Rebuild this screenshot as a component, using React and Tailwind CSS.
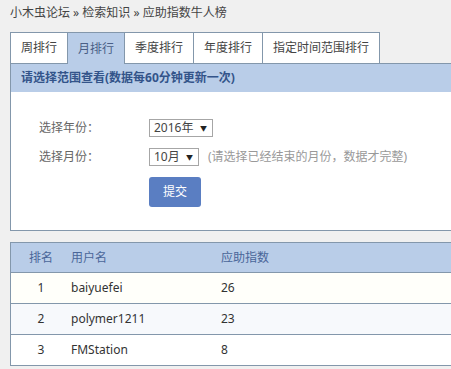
import React from "react";

const tabs = ["周排行", "月排行", "季度排行", "年度排行", "指定时间范围排行"];
const rows = [
  { r: "1", n: "baiyuefei", v: "26", bg: "bg-[#fffffa]" },
  { r: "2", n: "polymer1211", v: "23", bg: "bg-[#f7f9fc]" },
  { r: "3", n: "FMStation", v: "8", bg: "bg-white" },
];

function Select({ label, w }) {
  return (
    <div className={`h-[18px] ${w} border border-[#a6a6a6] bg-white flex items-center justify-between pl-[4px] pr-[5px] text-[12px] text-[#444] leading-none`}>
      <span>{label}</span>
      <span className="text-[7px] text-[#222]">▼</span>
    </div>
  );
}

export default function App() {
  return (
    <div
      className="w-[451px] h-[369px] overflow-hidden bg-[#f0f0f0] text-[12px] text-[#333]"
      style={{ fontFamily: '"Noto Sans", "Noto Sans CJK SC", sans-serif' }}
    >
      <div className="h-[32px] pl-[10px] pt-[4px] leading-[18px] text-[#444]">
        小木虫论坛 » 检索知识 » 应助指数牛人榜
      </div>
      <div className="pl-[10px] w-[520px]">
        <div className="flex">
          {tabs.map((t, i) => (
            <div
              key={t}
              className={`h-[31px] flex items-center px-[10px] border-t border-l border-[#8397ab] ${
                i === tabs.length - 1 ? "border-r" : ""
              } ${i === 1 ? "bg-[#b9cde8] text-[#4a5f86] relative z-10 h-[32px] -mb-px" : "bg-white text-[#444]"}`}
            >
              {t}
            </div>
          ))}
        </div>
        <div className="border border-[#8397ab] bg-white">
          <div className="h-[28px] bg-[#b9cde8] flex items-center pl-[10px] font-bold text-[#33548a]">
            请选择范围查看(数据每60分钟更新一次)
          </div>
          <div className="pt-[27px] pb-[23px] pl-[28px] flex flex-col gap-[11px]">
            <div className="flex items-center">
              <div className="w-[110px] text-[#666]">选择年份：</div>
              <Select label="2016年" w="w-[64px]" />
            </div>
            <div className="flex items-center">
              <div className="w-[110px] text-[#666]">选择月份：</div>
              <Select label="10月" w="w-[50px]" />
              <div className="ml-[9px] text-[#999]">(请选择已经结束的月份，数据才完整)</div>
            </div>
            <div className="flex">
              <div className="w-[110px]" />
              <div className="w-[52px] h-[30px] rounded-[3px] bg-[#5a7ec2] text-white flex items-center justify-center">
                提交
              </div>
            </div>
          </div>
        </div>
        <div className="mt-[11px] border-l border-t border-r border-[#8397ab]">
          <div className="h-[29px] bg-[#b9cde8] flex items-center text-[#4a6699] border-b border-[#8397ab] box-content">
            <div className="w-[60px] text-center">排名</div>
            <div className="w-[150px]">用户名</div>
            <div>应助指数</div>
          </div>
          {rows.map((row) => (
            <div key={row.r} className={`h-[30px] flex items-center border-b border-[#8397ab] box-content ${row.bg}`}>
              <div className="w-[60px] text-center">{row.r}</div>
              <div className="w-[150px]">{row.n}</div>
              <div>{row.v}</div>
            </div>
          ))}
        </div>
      </div>
    </div>
  );
}
